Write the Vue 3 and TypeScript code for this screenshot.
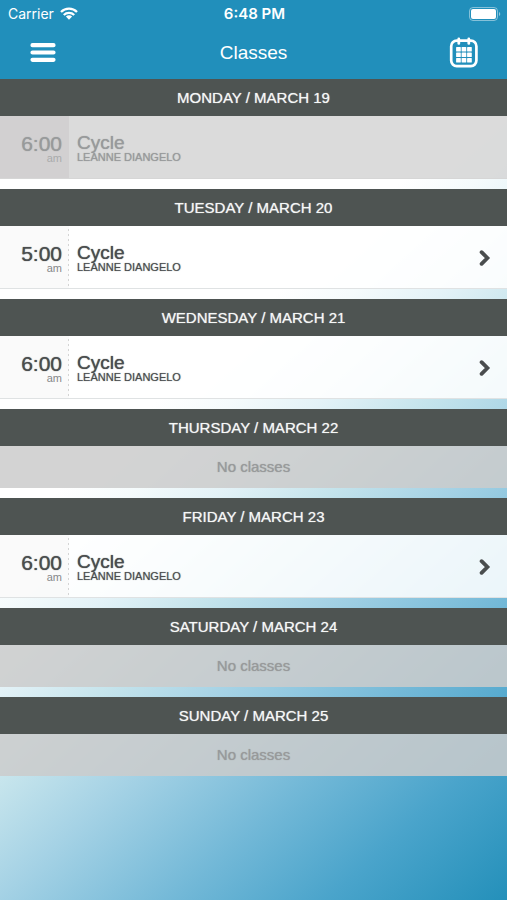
<script setup lang="ts">
interface ClassSlot {
  time: string
  period: string
  name: string
  instructor: string
  past?: boolean
}

interface Day {
  label: string
  classes: ClassSlot[]
}

const slot = (time: string, past = false): ClassSlot => ({
  time,
  period: 'am',
  name: 'Cycle',
  instructor: 'LEANNE DIANGELO',
  past,
})

const days: Day[] = [
  { label: 'MONDAY / MARCH 19', classes: [slot('6:00', true)] },
  { label: 'TUESDAY / MARCH 20', classes: [slot('5:00')] },
  { label: 'WEDNESDAY / MARCH 21', classes: [slot('6:00')] },
  { label: 'THURSDAY / MARCH 22', classes: [] },
  { label: 'FRIDAY / MARCH 23', classes: [slot('6:00')] },
  { label: 'SATURDAY / MARCH 24', classes: [] },
  { label: 'SUNDAY / MARCH 25', classes: [] },
]
</script>

<template>
  <div class="screen">
    <header class="top">
      <div class="status">
        <div class="carrier">
          <span>Carrier</span>
          <svg class="wifi" viewBox="0 0 18 13" width="18" height="13" aria-hidden="true">
            <g fill="none" stroke="#fff" stroke-width="2.3">
              <path d="M1 5A11.3 11.3 0 0 1 17 5" />
              <path d="M3.8 8A7.4 7.4 0 0 1 14.2 8" />
            </g>
            <path d="M5.9 9.6a4.4 4.4 0 0 1 6.2 0L9 12.8z" fill="#fff" />
          </svg>
        </div>
        <span class="clock">6:48 PM</span>
        <div class="power">
          <svg viewBox="0 0 32 14" width="32" height="14" aria-hidden="true">
            <rect x="0.5" y="0.5" width="28" height="13" rx="3.5" fill="none" stroke="#fff" stroke-opacity="0.45" />
            <rect x="2" y="2" width="25" height="10" rx="2" fill="#fff" />
            <path d="M30 5a2.2 2.2 0 0 1 0 4z" fill="#fff" fill-opacity="0.5" />
          </svg>
        </div>
      </div>
      <nav class="bar">
        <button class="icon-button" type="button" aria-label="Menu">
          <svg viewBox="0 0 26 20" width="26" height="20">
            <path d="M2.5 2.2h21M2.5 9.5h21M2.5 16.8h21" stroke="#fff" stroke-width="4.2" stroke-linecap="round" />
          </svg>
        </button>
        <h1 class="title">Classes</h1>
        <button class="icon-button" type="button" aria-label="Calendar">
          <svg viewBox="0 1 30 32" width="30" height="32">
            <rect x="2.2" y="4.7" width="25.2" height="25.4" rx="5.5" fill="none" stroke="#fff" stroke-width="2.7" />
            <path d="M9.8 3v4.4M19.8 3v4.4" stroke="#fff" stroke-width="2.8" stroke-linecap="round" />
            <g fill="#fff">
              <template v-for="row in 3" :key="row">
                <rect
                  v-for="col in 3"
                  :key="col"
                  :x="1.6 + col * 5.5"
                  :y="5.4 + row * 5.5"
                  width="4.7"
                  height="4.7"
                  rx="0.6"
                />
              </template>
            </g>
          </svg>
        </button>
      </nav>
    </header>

    <main class="schedule">
      <section v-for="day in days" :key="day.label" class="day">
        <h2 class="day-label">{{ day.label }}</h2>
        <p v-if="day.classes.length === 0" class="empty">No classes</p>
        <component
          :is="item.past ? 'div' : 'a'"
          v-for="item in day.classes"
          :key="item.time"
          class="slot"
          :class="{ past: item.past }"
          :href="item.past ? undefined : '#'"
        >
          <div class="when">
            <span class="time">{{ item.time }}</span>
            <span class="period">{{ item.period }}</span>
          </div>
          <div class="what">
            <span class="name">{{ item.name }}</span>
            <span class="instructor">{{ item.instructor }}</span>
          </div>
          <svg v-if="!item.past" class="chevron" viewBox="0 0 12 18" width="12" height="18" aria-hidden="true">
            <path d="M2.6 4.2L8.4 10l-5.8 5.8" fill="none" stroke="#4a4d4e" stroke-width="3.8" stroke-linecap="round" />
          </svg>
        </component>
      </section>
    </main>
  </div>
</template>

<style>
body {
  margin: 0;
}
</style>

<style scoped>
.screen {
  min-height: 100vh;
  box-sizing: border-box;
  font-family: "Liberation Sans", Arial, sans-serif;
  color: #4a4d4e;
  background: linear-gradient(
    138deg,
    #fff 40%,
    #f5fbfc 45%,
    #e3f2f7 51%,
    #c5e4ec 58%,
    #a5d2e5 66%,
    #72b8d7 78%,
    #4aa4cb 88%,
    #2490ba 100%
  );
}

.top {
  background: #218fbb;
  color: #fff;
}

.status {
  display: grid;
  grid-template-columns: 1fr auto 1fr;
  align-items: center;
  height: 27px;
  padding: 0 6px 0 8px;
  font-family: Inter, sans-serif;
  font-size: 14px;
  line-height: 27px;
}

.carrier {
  display: flex;
  align-items: center;
  gap: 6px;
}

.clock {
  font-size: 15px;
  font-weight: 600;
}

.power {
  display: flex;
  justify-content: flex-end;
}

.bar {
  display: flex;
  align-items: center;
  justify-content: space-between;
  height: 52px;
  padding: 0 20px;
}

.icon-button {
  display: flex;
  align-items: center;
  justify-content: center;
  width: 46px;
  height: 44px;
  padding: 0;
  border: 0;
  background: none;
}

.title {
  margin: 0;
  font-size: 19px;
  font-weight: 400;
  line-height: 52px;
}

.day + .day {
  margin-top: 10px;
}

.day-label {
  margin: 0;
  background: #4e5452;
  color: #f6f8f7;
  font-size: 15px;
  font-weight: 400;
  line-height: 37px;
  text-align: center;
  text-shadow: 0 0 1px rgba(255, 255, 255, 0.7);
}

.empty {
  margin: 0;
  background: rgba(203, 203, 203, 0.85);
  color: #989a9b;
  font-size: 15px;
  line-height: 42px;
  text-align: center;
  text-shadow: 0 0 1px currentColor;
}

.slot {
  display: flex;
  align-items: center;
  box-sizing: border-box;
  height: 63px;
  padding-right: 16px;
  border-bottom: 1px solid #dfe2e3;
  background: rgba(255, 255, 255, 0.86);
  color: inherit;
  text-decoration: none;
}

.when,
.what {
  display: flex;
  flex-direction: column;
  box-sizing: border-box;
  height: 100%;
  padding-top: 17px;
}

.when {
  align-items: flex-end;
  width: 69px;
  padding-right: 7px;
  background:
    repeating-linear-gradient(transparent 0 3px, #d4d4d4 3px 5px) right / 1px 100% no-repeat,
    rgba(245, 245, 245, 0.5);
}

.what {
  flex: 1;
  padding-left: 8px;
}

.time,
.name {
  line-height: 20px;
  text-shadow: 0 0 1px currentColor;
}

.time {
  padding-top: 1px;
  font-size: 21px;
}

.name {
  font-size: 19px;
}

.period,
.instructor {
  font-size: 11px;
  line-height: 8px;
}

.period {
  color: #85888a;
}

.instructor {
  text-shadow: 0 0 1px rgba(74, 77, 78, 0.7);
}

.past {
  border-bottom-color: #d6d6d6;
  background: rgba(213, 213, 213, 0.86);
  color: #989a9b;
}

.past .when {
  background: #d2d0d1;
}

.past .period {
  color: #a9abac;
}

.past .instructor {
  text-shadow: 0 0 1px currentColor;
}
</style>
